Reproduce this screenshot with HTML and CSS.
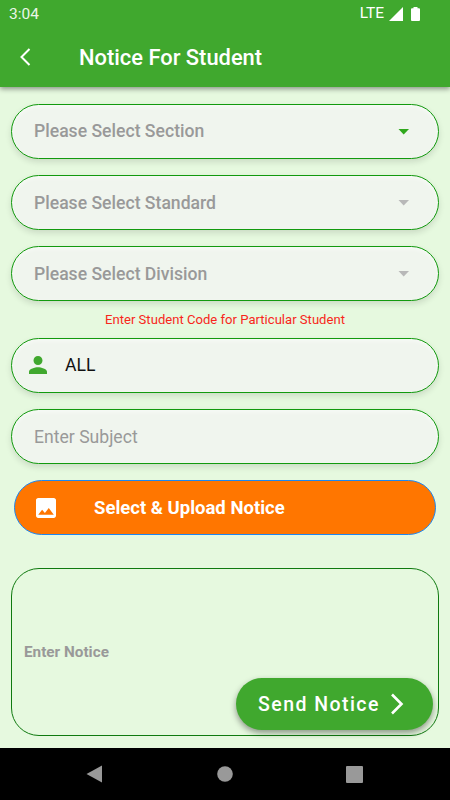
FILE: index.html
```html
<!DOCTYPE html>
<html lang="en">
<head>
  <meta charset="UTF-8">
  <meta name="viewport" content="width=device-width, initial-scale=1.0">
  <title>Notice For Student</title>
  <link rel="stylesheet" href="styles.css">
</head>
<body>

  <!-- Status bar and title -->
  <header class="header">
    <div class="status">
      <span class="time">3:04</span>
      <span class="network">LTE</span>
      <svg class="signal" width="14" height="14" viewBox="0 0 14 14"><path d="M14 0v14H0z"/></svg>
      <svg class="battery" width="9" height="14" viewBox="0 0 9 14"><path d="M2.5 1.2V0h4v1.2H8a1 1 0 0 1 1 1V13a1 1 0 0 1-1 1H1a1 1 0 0 1-1-1V2.200a1 1 0 0 1 1-1z"/></svg>
    </div>
    <div class="titleBar">
      <svg class="back" width="12" height="18" viewBox="0 0 12 18"><path d="M10.500 1L2.500 9l8 8"/></svg>
      <h1>Notice For Student</h1>
    </div>
  </header>

  <main class="form">
    <!-- Dropdowns -->
    <div class="field select">
      <span>Please Select Section</span>
      <svg class="arrow active" width="11" height="6" viewBox="0 0 11 6"><path d="M.5 0h10.500L5.700 5.500z"/></svg>
    </div>
    <div class="field select">
      <span>Please Select Standard</span>
      <svg class="arrow" width="11" height="6" viewBox="0 0 11 6"><path d="M.5 0h10.500L5.700 5.500z"/></svg>
    </div>
    <div class="field select">
      <span>Please Select Division</span>
      <svg class="arrow" width="11" height="6" viewBox="0 0 11 6"><path d="M.5 0h10.500L5.700 5.500z"/></svg>
    </div>

    <p class="hint">Enter Student Code for Particular Student</p>

    <!-- Student code and subject -->
    <div class="field code">
      <svg class="person" width="18" height="18" viewBox="4 4 16 16"><path d="M12 12c2.210 0 4-1.790 4-4s-1.790-4-4-4-4 1.790-4 4 1.790 4 4 4zm0 2c-2.670 0-8 1.340-8 4v2h16v-2c0-2.660-5.330-4-8-4z"/></svg>
      <span>ALL</span>
    </div>
    <div class="field subject">Enter Subject</div>

    <!-- Upload button -->
    <div class="upload">
      <svg class="image" width="20" height="20" viewBox="3 3 18 18"><path d="M21 19V5c0-1.100-.9-2-2-2H5c-1.100 0-2 .9-2 2v14c0 1.100.9 2 2 2h14c1.100 0 2-.9 2-2zM8.500 13.500l2.500 3.010L14.500 12l4.500 6H5l3.500-4.500z"/></svg>
      <span>Select &amp; Upload Notice</span>
    </div>

    <!-- Notice text -->
    <div class="notice">
      <span>Enter Notice</span>
      <div class="send">
        <span>Send Notice</span>
        <svg width="14" height="22" viewBox="0 0 14 22"><path d="M2 1.500L11.500 11 2 20.500"/></svg>
      </div>
    </div>
  </main>

  <!-- System navigation -->
  <nav class="navBar">
    <svg width="17" height="18" viewBox="0 0 17 18"><path d="M16 .5v17L.5 9z"/></svg>
    <svg width="16" height="16" viewBox="0 0 16 16"><circle cx="8" cy="8" r="7.800"/></svg>
    <svg width="17" height="17" viewBox="0 0 17 17"><rect width="17" height="17" rx="1"/></svg>
  </nav>

</body>
</html>
```
FILE: styles.css
```css
* {
  box-sizing: border-box;
}

body {
  font-family: 'Roboto', sans-serif;
  margin: 0;
  height: 100vh;
  background: #e6f9df;
  display: flex;
  flex-direction: column;
  overflow: hidden;
}

svg {
  display: block;
  flex: none;
}

/* Header */
.header {
  height: 87px;
  flex: none;
  background: #40a82e;
  color: #fff;
  box-shadow: 0 2px 5px rgba(0, 0, 0, 0.4);
}

.status {
  display: flex;
  align-items: center;
  height: 27px;
  padding: 0 30px 0 9px;
  font-size: 15.5px;
}

.time {
  flex: 1;
  padding-top: 1px;
  color: #eaf6e8;
}

.network {
  padding-bottom: 1px;
}

.signal {
  margin: 0 8px 0 5px;
}

.status svg {
  fill: #fff;
}

.titleBar {
  display: flex;
  align-items: center;
  height: 60px;
  padding-left: 19px;
}

.back {
  fill: none;
  stroke: #fff;
  stroke-width: 2;
}

h1 {
  margin: 0 0 0 48px;
  font-size: 21.9px;
  font-weight: 500;
}

/* Form */
.form {
  flex: 1;
  padding: 17px 11px 0;
}

.field {
  display: flex;
  align-items: center;
  height: 55px;
  margin-bottom: 16px;
  padding: 0 29px 0 22px;
  border: 1px solid #129a0e;
  border-radius: 28px;
  background: #f0f5ee;
  box-shadow: 0 3px 6px rgba(0, 0, 0, 0.12), inset 0 2px 4px rgba(255, 255, 255, 0.5);
  font-size: 17.6px;
}

.select {
  justify-content: space-between;
  font-weight: 500;
  color: #999;
}

.select:first-child,
.code {
  padding-bottom: 1px;
}

.arrow {
  fill: #b8b8b8;
}

.arrow.active {
  margin-top: 1px;
  fill: #2fa81c;
}

.hint {
  margin: -16px 0 0;
  height: 37px;
  line-height: 37px;
  text-align: center;
  font-size: 13.1px;
  color: #f8261b;
}

.code {
  padding-left: 17px;
  color: #111;
}

.person {
  margin-right: 18px;
  fill: #40a82e;
}

.subject {
  color: #999;
}

.upload {
  display: flex;
  align-items: center;
  height: 55px;
  margin: 0 3px 33px;
  padding-left: 21px;
  border: 1px solid #1d87f0;
  border-radius: 28px;
  background: #ff7600;
  color: #fff;
  font-size: 18.5px;
  font-weight: 700;
}

.image {
  margin-right: 38px;
  fill: #fff;
}

.notice {
  position: relative;
  display: flex;
  align-items: center;
  height: 168px;
  padding-left: 12px;
  border: 1px solid #107a10;
  border-radius: 28px;
  color: #999;
  font-size: 15.3px;
  font-weight: 700;
}

/* Floating over the notice box */
.send {
  position: absolute;
  right: 5px;
  bottom: 5px;
  display: flex;
  align-items: center;
  width: 197px;
  height: 52px;
  padding-left: 22px;
  border-radius: 26px;
  background: #40a82e;
  box-shadow: 0 3px 6px rgba(0, 0, 0, 0.4);
  color: #fff;
  font-size: 19.5px;
  font-weight: 500;
  letter-spacing: 1.45px;
}

.send svg {
  margin-left: 10px;
  fill: none;
  stroke: #fff;
  stroke-width: 2.6;
}

/* Navigation */
.navBar {
  display: flex;
  align-items: center;
  justify-content: space-between;
  height: 52px;
  flex: none;
  padding: 0 87px 0 86px;
  background: #000;
}

.navBar svg {
  fill: #999;
}
```
